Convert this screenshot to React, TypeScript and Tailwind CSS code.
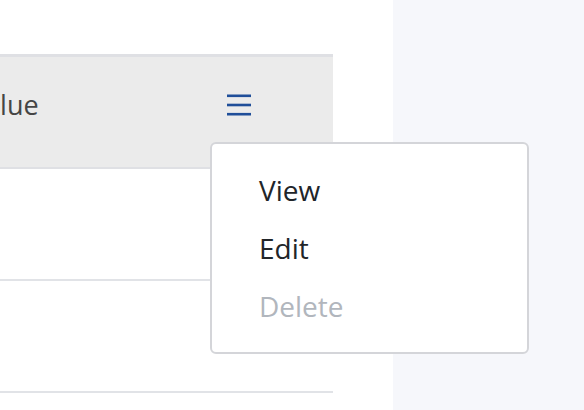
import React from "react";

const items = [
  { label: "View", disabled: false },
  { label: "Edit", disabled: false },
  { label: "Delete", disabled: true },
];

function MenuIcon() {
  return (
    <svg width="24" height="22" viewBox="0 0 24 22" className="text-[#1f4e99]">
      <rect x="0" y="0.5" width="24" height="2.6" fill="currentColor" />
      <rect x="0" y="9.7" width="24" height="2.6" fill="currentColor" />
      <rect x="0" y="18.9" width="24" height="2.6" fill="currentColor" />
    </svg>
  );
}

export default function App() {
  return (
    <div className="flex h-[410px] w-[584px] overflow-hidden font-['Open_Sans',sans-serif]">
      {/* --- MAIN --- */}
      <div className="relative w-[393px] bg-white">
        <div className="w-[333px] pt-[54px]">
          {/* Header */}
          <div className="flex h-[115px] items-center justify-between border-t-[3px] border-b-2 border-[#dfe0e4] bg-[#ebebeb] pb-[14px] pr-[82px]">
            <span className="-ml-[31px] text-[27px] text-[#454545]">Value</span>
            <MenuIcon />
          </div>
          {/* Rows */}
          <div className="h-[112px] border-b-2 border-[#e1e3e7]" />
          <div className="h-[112px] border-b-2 border-[#e1e3e7]" />
        </div>

        {/* Dropdown */}
        <div className="absolute left-[210px] top-[142px] w-[319px] rounded-[6px] border-2 border-[#d4d5d9] bg-white py-[17px]">
          {items.map((item) => (
            <div
              key={item.label}
              className={`flex h-[58px] items-center px-[47px] text-[28px] ${
                item.disabled ? "text-[#b1b6bd]" : "text-[#212529]"
              }`}
            >
              {item.label}
            </div>
          ))}
        </div>
      </div>

      {/* --- SIDE --- */}
      <div className="flex-1 bg-[#f6f7fb]" />
    </div>
  );
}
